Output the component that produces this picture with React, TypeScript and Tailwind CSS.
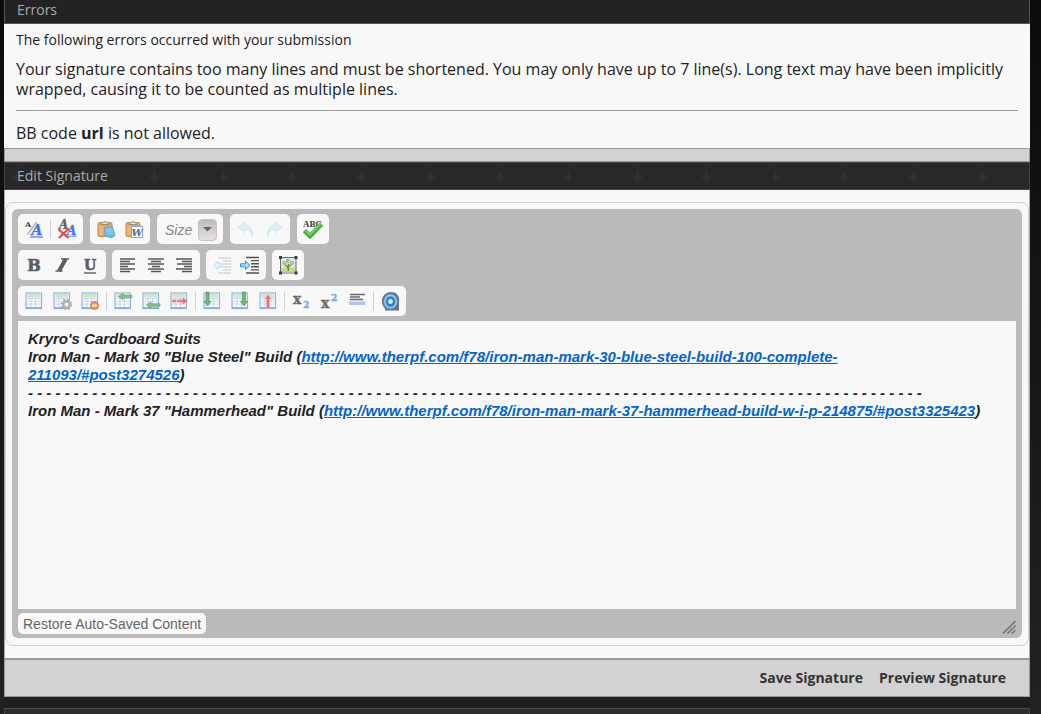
import type { ReactNode } from "react";

function Svg({ children }: { children: ReactNode }) {
    return (
        <svg width="18" height="18" viewBox="0 0 18 18" fill="none" aria-hidden="true" className="overflow-visible">
            {children}
        </svg>
    );
}

const serif = "'DejaVu Serif', serif";

function TableBase({ children }: { children?: ReactNode }) {
    return (
        <Svg>
            <rect x="1" y="1" width="15.5" height="15.5" fill="#eaf2fb" stroke="#96b7e0" strokeWidth="1.200" />
            <rect x="2.5" y="2.200" width="12.5" height="3" fill="#cfe5c5" />
            <rect x="3.500" y="6.500" width="10.500" height="8" fill="#fdfeff" />
            <path d="M3 6.500h11.500M3 9.200h11.500M3 12h11.500M6 6v9M10.500 6v9" stroke="#bacde8" strokeWidth=".8" />
            <path d="M1 16h15.500" stroke="#7fa9df" strokeWidth="1.500" />
            {children}
        </Svg>
    );
}

function LeftArrow({ y }: { y: number }) {
    return (
        <g transform={`translate(0 ${y})`}>
            <path d="M4.500 0L9 -3.200v2h9v2.400H9v2z" fill="#86c083" stroke="#5f9f60" strokeWidth=".6" />
        </g>
    );
}

function DeleteRowArrow() {
    return <path d="M2 7.700h4v2.600H2zM7 7.700h5.500V5.500L18 9l-5.500 3.500v-2.200H7z" fill="#f56d6d" stroke="#fbb" strokeWidth=".5" />;
}

function ColArrow({ x, color, edge, up }: { x: number; color: string; edge: string; up?: boolean }) {
    return (
        <g transform={up ? `translate(${x} 16.500) scale(1 -1)` : `translate(${x} 0)`}>
            <path d="M-1.500 0h3v9.500h2L0 14L-3.500 9.500h2z" fill={color} stroke={edge} strokeWidth=".6" />
        </g>
    );
}

function TableProps() {
    return (
        <TableBase>
            <circle cx="13.500" cy="12.500" r="4.800" stroke="#9b9ea3" strokeWidth="1.600" strokeDasharray="1.900 1.870" />
            <circle cx="13.500" cy="12.500" r="3.200" stroke="#aeb1b5" strokeWidth="2.400" fill="#f8f8f8" />
        </TableBase>
    );
}

function TableDelete() {
    return (
        <TableBase>
            <circle cx="13.500" cy="13.500" r="4" fill="#f2965c" stroke="#d67945" />
            <path d="M11.200 13.500h4.600" stroke="#fff" strokeWidth="1.800" />
        </TableBase>
    );
}

function FontIcon() {
    return (
        <Svg>
            <text x="0" y="7" fontFamily={serif} fontWeight="bold" fontSize="8" fill="#3f3f3f">A</text>
            <path d="M11.500 2L2.500 14.500" stroke="#b0b0b0" strokeWidth="1.300" />
            <text x="6.500" y="15" fontFamily={serif} fontWeight="bold" fontStyle="italic" fontSize="14" fill="#4573f2" stroke="#4573f2" strokeWidth=".3">A</text>
            <path d="M5 17h13" stroke="#6e90f5" strokeWidth="1.500" />
        </Svg>
    );
}

function RemoveFormat() {
    return (
        <Svg>
            <text x="1" y="9" fontFamily={serif} fontWeight="bold" fontStyle="italic" fontSize="12" fill="#636363" stroke="#636363" strokeWidth=".3">A</text>
            <text x="9" y="15" fontFamily={serif} fontWeight="bold" fontStyle="italic" fontSize="12" fill="#4573f2" stroke="#4573f2" strokeWidth=".3">A</text>
            <path d="M9 16.300h9.500" stroke="#7c9bf5" strokeWidth="1.200" />
            <path d="M.500 9.500l10 8.500M11 8.500L.800 18" stroke="#ee4448" strokeWidth="2.200" />
        </Svg>
    );
}

function Clipboard() {
    return (
        <>
            <rect x="1" y="2.500" width="14" height="14" rx="1.500" fill="#e9a65d" stroke="#c18a4e" />
            <path d="M3 6v9M5 6v9" stroke="#f6c68d" />
            <path d="M4 4.500c0-2 2-1.200 2.500-2.700h3C10 3.300 12 2.500 12 4.500z" fill="#e3d9c4" stroke="#8d7f69" strokeWidth=".8" />
        </>
    );
}

function PasteText() {
    return (
        <Svg>
            <Clipboard />
            <path d="M7.500 7.500l8-1 2.500 9-3.500 2.500-6.500-2z" fill="#66bde6" stroke="#4fa6cf" strokeWidth=".8" />
            <path d="M9 9.500l6-.7M9 11.500l7-.7M9.500 13.500l6.500-.7" stroke="#a4dbf1" strokeWidth=".7" />
        </Svg>
    );
}

function PasteWord() {
    return (
        <Svg>
            <Clipboard />
            <rect x="6.500" y="6.500" width="11" height="11" fill="#f7faff" stroke="#7da7e0" />
            <text x="6.500" y="15.500" fontFamily={serif} fontWeight="bold" fontStyle="italic" fontSize="10" fill="#5b6d84">W</text>
        </Svg>
    );
}

function Curve({ flip }: { flip?: boolean }) {
    return (
        <Svg>
            <g transform={flip ? "translate(18 0) scale(-1 1)" : undefined}>
                <path d="M1.500 7L7.500 1.800v3c5.500.2 8.500 4.500 7.500 11.700-.8-4.700-3-7-7.500-6.800v3.200z" fill="#dff1f8" stroke="#c8e5f0" strokeWidth=".8" />
            </g>
        </Svg>
    );
}

function SpellCheck() {
    return (
        <svg width="20" height="20" viewBox="0 0 20 20" fill="none" aria-hidden="true">
            <text x="0" y="8" fontFamily="'Liberation Serif', serif" fontWeight="bold" fontSize="9" fill="#3f3f3f">ABC</text>
            <path d="M1.500 11.500l5.500 5.500L18.500 5" stroke="#3fa238" strokeWidth="4.500" />
            <path d="M2 11l5 4.800L18 4.500" stroke="#62d256" strokeWidth="2.600" />
        </svg>
    );
}

function Bold() {
    return (
        <Svg>
            <text x="9" y="14.500" textAnchor="middle" fontFamily={serif} fontWeight="bold" fontSize="16" fill="#5d5d64" stroke="#5d5d64" strokeWidth=".7">B</text>
        </Svg>
    );
}

function Italic() {
    return (
        <Svg>
            <path d="M8 3h8M2.500 15h7" stroke="#5d5d64" strokeWidth="1.300" />
            <path d="M12.700 3L6 15" stroke="#5d5d64" strokeWidth="4" />
        </Svg>
    );
}

function Underline() {
    return (
        <Svg>
            <text x="9" y="14" textAnchor="middle" fontFamily={serif} fontWeight="bold" fontSize="14" fill="#5d5d64" stroke="#5d5d64" strokeWidth=".6">U</text>
            <path d="M3 17h12" stroke="#5d5d64" strokeWidth="1.400" />
        </Svg>
    );
}

function AlignLeft() {
    return (
        <Svg>
            <path d="M1 3h15M1 5.500h10M1 8h15M1 10.500h8M1 13h15M1 15.500h10" stroke="#55555a" strokeWidth="1.400" />
        </Svg>
    );
}

function AlignCenter() {
    return (
        <Svg>
            <path d="M1 3h16M4 5.500h10M1 8h16M5 10.500h8M1 13h16M4 15.500h10" stroke="#55555a" strokeWidth="1.400" />
        </Svg>
    );
}

function AlignRight() {
    return (
        <Svg>
            <path d="M1 3h16M7 5.500h10M2 8h15M9 10.500h8M1 13h16M7 15.500h10" stroke="#55555a" strokeWidth="1.400" />
        </Svg>
    );
}

function Outdent() {
    return (
        <Svg>
            <path d="M5 2h13M10 5h8M10 8h8M10 11h8M10 14h8M5 17h13" stroke="#c6c6c8" />
            <path d="M.5 9.500L5 5.300v2.500h4v3H5v2.700z" fill="#e7f4fb" stroke="#b2dcf1" />
        </Svg>
    );
}

function Indent() {
    return (
        <Svg>
            <path d="M5 1.500h13M10 4.600h8M10 7.700h8M10 10.800h8M10 13.900h8M5 17h13" stroke="#505055" strokeWidth="1.400" />
            <path d="M9 9.300L4.500 5v2.800h-5v3h5v2.800z" fill="#a5dcf6" stroke="#2f94cf" />
        </Svg>
    );
}

function Picture() {
    return (
        <Svg>
            <rect x="1.500" y="1.500" width="15.500" height="15.500" fill="#d5e8f6" stroke="#68686c" />
            <rect x="2.500" y="11.500" width="13.500" height="5" fill="#c0dc80" />
            <path d="M9.300 15c.5-3-.5-4.500-3.300-6M9.500 12c0-2 2-2.500 3-4M9.300 14.500V8" stroke="#86774d" strokeWidth="1.300" />
            <g fill="#9ac263">
                <circle cx="5.500" cy="7" r="2" />
                <circle cx="9" cy="5" r="2.200" />
                <circle cx="12.800" cy="7" r="2.200" />
            </g>
            <path d="M5 6.500l2-1M9 5l2 1M12 7.500l1.500-1" stroke="#e4f0bd" />
            <path d="M0 0h3v3H0zM15.500 0h3v3h-3zM0 15.500h3v3H0zM15.500 15.500h3v3h-3z" fill="#3d3d42" />
        </Svg>
    );
}

function Subscript() {
    return (
        <Svg>
            <text x="1" y="12" fontFamily={serif} fontWeight="bold" fontSize="14" fill="#6c6c70" stroke="#6c6c70" strokeWidth=".4">x</text>
            <text x="11" y="16" fontFamily={serif} fontWeight="bold" fontSize="9" fill="#79a6f0" stroke="#79a6f0" strokeWidth=".4">2</text>
        </Svg>
    );
}

function Superscript() {
    return (
        <Svg>
            <text x="1" y="15.500" fontFamily={serif} fontWeight="bold" fontSize="14" fill="#6c6c70" stroke="#6c6c70" strokeWidth=".4">x</text>
            <text x="11" y="9" fontFamily={serif} fontWeight="bold" fontSize="9" fill="#79a6f0" stroke="#79a6f0" strokeWidth=".4">2</text>
        </Svg>
    );
}

function Rule() {
    return (
        <Svg>
            <path d="M2 2.500h15M2 5h10M2 7.500h13" stroke="#69696c" strokeWidth="1.500" />
            <rect x="1" y="9.500" width="16.500" height="3.500" fill="#a8c7f5" />
        </Svg>
    );
}

function Video() {
    return (
        <svg width="20" height="20" viewBox="0 0 20 20" fill="none" aria-hidden="true">
            <path d="M5 17.500C-1.500 11 3 1 11 1c6 0 9 4.500 8 10v8.500H5z" fill="#6b737b" />
            <ellipse cx="10.500" cy="10.500" rx="7" ry="7.700" fill="#8cc8f2" stroke="#4b86ba" />
            <ellipse cx="10.500" cy="10.500" rx="4.700" ry="5.200" fill="#3a80c0" />
            <circle cx="10.500" cy="10.500" r="2.400" fill="#d8f0ff" />
        </svg>
    );
}

function Group({ children }: { children: ReactNode }) {
    return <div className="flex h-[30px] items-center rounded-[5px] bg-[#f8f8f8] px-0.5">{children}</div>;
}

function Tool({ label, disabled, children }: { label: string; disabled?: boolean; children: ReactNode }) {
    return (
        <button type="button" aria-label={label} title={label} disabled={disabled} className="flex h-7 w-7 items-center justify-center rounded">
            {children}
        </button>
    );
}

function Separator() {
    return <span className="mx-0.5 h-[18px] w-px bg-[#d0d0d0]" />;
}

function PanelTitle({ id, children, marks }: { id: string; children: ReactNode; marks?: boolean }) {
    return (
        <div className="relative border border-[#444] bg-[#282828] px-3 text-sm leading-[26px] text-[#aaa]">
            {marks && (
                <svg className="absolute inset-0 h-full w-full" aria-hidden="true">
                    <defs>
                        <pattern id="marks" width="69" height="26" patternUnits="userSpaceOnUse">
                            <path d="M11.500 0v26" stroke="#2a2a2a" />
                            <path d="M7 14.500h9M11.500 10v9" stroke="#323232" strokeWidth="2" />
                        </pattern>
                    </defs>
                    <rect width="100%" height="100%" fill="url(#marks)" />
                </svg>
            )}
            <h2 id={id} className="relative">{children}</h2>
        </div>
    );
}

function Toolbar() {
    return (
        <div role="toolbar" aria-label="Formatting" className="flex flex-col gap-1.5">
            <div className="flex flex-wrap gap-[7px]">
                <Group>
                    <Tool label="Switch Editor Mode"><FontIcon /></Tool>
                    <Separator />
                    <Tool label="Remove Format"><RemoveFormat /></Tool>
                </Group>
                <Group>
                    <Tool label="Paste as plain text"><PasteText /></Tool>
                    <Tool label="Paste from Word"><PasteWord /></Tool>
                </Group>
                <Group>
                    <div className="relative">
                        <select aria-label="Size" defaultValue="" className="h-6 w-[62px] appearance-none bg-transparent pl-1.5 font-['Liberation_Sans',Arial,sans-serif] text-sm text-[#858585] italic">
                            <option value="">Size</option>
                            <option value="1">1</option>
                            <option value="2">2</option>
                            <option value="3">3</option>
                        </select>
                        <span className="pointer-events-none absolute top-0.5 right-1 flex h-[22px] w-[19px] items-center justify-center rounded border border-[#c9c4c4] bg-linear-to-b from-[#bfb9b9] to-[#e6e2e2]">
                            <svg width="9" height="5" viewBox="0 0 9 5" aria-hidden="true">
                                <path d="M0 0h9L4.500 4.500z" fill="#666" />
                            </svg>
                        </span>
                    </div>
                </Group>
                <Group>
                    <Tool label="Undo" disabled><Curve /></Tool>
                    <Tool label="Redo" disabled><Curve flip /></Tool>
                </Group>
                <Group>
                    <Tool label="Check Spelling"><SpellCheck /></Tool>
                </Group>
            </div>
            <div className="flex flex-wrap gap-1.5">
                <Group>
                    <Tool label="Bold"><Bold /></Tool>
                    <Tool label="Italic"><Italic /></Tool>
                    <Tool label="Underline"><Underline /></Tool>
                </Group>
                <Group>
                    <Tool label="Align Left"><AlignLeft /></Tool>
                    <Tool label="Center"><AlignCenter /></Tool>
                    <Tool label="Align Right"><AlignRight /></Tool>
                </Group>
                <Group>
                    <Tool label="Decrease Indent" disabled><Outdent /></Tool>
                    <Tool label="Increase Indent"><Indent /></Tool>
                </Group>
                <Group>
                    <Tool label="Insert Image"><Picture /></Tool>
                </Group>
            </div>
            <div className="flex flex-wrap gap-1.5">
                <Group>
                    <Tool label="Table"><TableBase /></Tool>
                    <Tool label="Table Properties"><TableProps /></Tool>
                    <Tool label="Delete Table"><TableDelete /></Tool>
                    <Separator />
                    <Tool label="Insert Row Before"><TableBase><LeftArrow y={4.5} /></TableBase></Tool>
                    <Tool label="Insert Row After"><TableBase><LeftArrow y={13} /></TableBase></Tool>
                    <Tool label="Delete Row"><TableBase><DeleteRowArrow /></TableBase></Tool>
                    <Separator />
                    <Tool label="Insert Column Before"><TableBase><ColArrow x={4.5} color="#79b479" edge="#4f8f52" /></TableBase></Tool>
                    <Tool label="Insert Column After"><TableBase><ColArrow x={13} color="#79b479" edge="#4f8f52" /></TableBase></Tool>
                    <Tool label="Delete Column"><TableBase><ColArrow x={9} color="#f56d6d" edge="#fbb" up /></TableBase></Tool>
                    <Separator />
                    <Tool label="Subscript"><Subscript /></Tool>
                    <Tool label="Superscript"><Superscript /></Tool>
                    <Tool label="Insert Horizontal Line"><Rule /></Tool>
                    <Separator />
                    <Tool label="Insert Video"><Video /></Tool>
                </Group>
            </div>
        </div>
    );
}

const divider = Array(98).fill("-").join(" ");

export default function App() {
    return (
        <main className="flex min-h-screen flex-col bg-linear-to-b from-[#0b0b0b] to-[#222] pr-[11px] pl-1 font-['Open_Sans',sans-serif] text-[#222]">
            <section aria-labelledby="errors-title" className="bg-[#f8f8f8]">
                <div className="h-6 overflow-hidden border-x border-b border-[#555] bg-[#232323] px-3 text-sm leading-5 text-[#aaa]">
                    <h2 id="errors-title">Errors</h2>
                </div>
                <div className="px-3 pt-1.5 pb-[5px]">
                    <p className="text-sm">The following errors occurred with your submission</p>
                    <ul className="pt-[9px] text-base leading-5">
                        <li className="mb-3 border-b border-[#999] pb-[11px]">
                            Your signature contains too many lines and must be shortened. You may only have up to 7 line(s). Long text may have been implicitly wrapped, causing it to be counted as multiple lines.
                        </li>
                        <li>
                            BB code <b>url</b> is not allowed.
                        </li>
                    </ul>
                </div>
                <div className="h-[14px] border border-[#999] bg-[#d2d2d2]" />
            </section>

            <form className="bg-[#f8f8f8]" onSubmit={(e) => e.preventDefault()}>
                <PanelTitle id="signature-title" marks>Edit Signature</PanelTitle>
                <div className="border-x border-[#aaa] py-3">
                    <div className="rounded-lg border border-[#d0d0d0] px-1.5 pt-1.5 pb-[7px]">
                        <div className="rounded-md bg-[#bababa] px-1.5 pt-[5px] pb-1">
                            <Toolbar />
                            <div
                                role="textbox"
                                aria-multiline="true"
                                aria-labelledby="signature-title"
                                contentEditable
                                suppressContentEditableWarning
                                spellCheck={false}
                                className="mt-[5px] min-h-72 bg-[#f8f8f8] px-2.5 py-[9px] font-['Liberation_Sans',Arial,sans-serif] text-[15px] leading-[18px] font-bold italic outline-none"
                            >
                                <div>Kryro's Cardboard Suits</div>
                                <div>
                                    Iron Man - Mark 30 "Blue Steel" Build (
                                    <a href="#post3274526" className="text-[#0066cc] underline">
                                        http://www.therpf.com/f78/iron-man-mark-30-blue-steel-build-100-complete-
                                        <br />
                                        211093/#post3274526
                                    </a>
                                    )
                                </div>
                                <div>{divider}</div>
                                <div>
                                    Iron Man - Mark 37 "Hammerhead" Build (
                                    <a href="#post3325423" className="text-[#0066cc] underline">http://www.therpf.com/f78/iron-man-mark-37-hammerhead-build-w-i-p-214875/#post3325423</a>)
                                </div>
                            </div>
                            <div className="flex items-end justify-between pt-1">
                                <button type="button" className="h-[21px] rounded-[5px] bg-[#f8f8f8] px-[5px] font-['Liberation_Sans',Arial,sans-serif] text-sm text-[#666]">
                                    Restore Auto-Saved Content
                                </button>
                                <svg width="14" height="14" viewBox="0 0 14 14" fill="none" aria-hidden="true">
                                    <path d="M1 13.500L13.500 1M5.500 13.500l8-8M10 13.500l3.500-3.500" stroke="#707070" strokeWidth="1.500" />
                                </svg>
                            </div>
                        </div>
                    </div>
                </div>
                <div className="flex justify-end gap-4 border border-t-2 border-[#999] bg-[#d2d2d2] px-[23px] py-2 text-sm font-bold text-[#333]">
                    <button type="submit">Save Signature</button>
                    <button type="button">Preview Signature</button>
                </div>
            </form>

            <div className="h-[11px] bg-[#1f1f1f]" />
            <div className="min-h-1 flex-1 border border-b-0 border-[#484848] bg-[#2d2d2d]" />
        </main>
    );
}
